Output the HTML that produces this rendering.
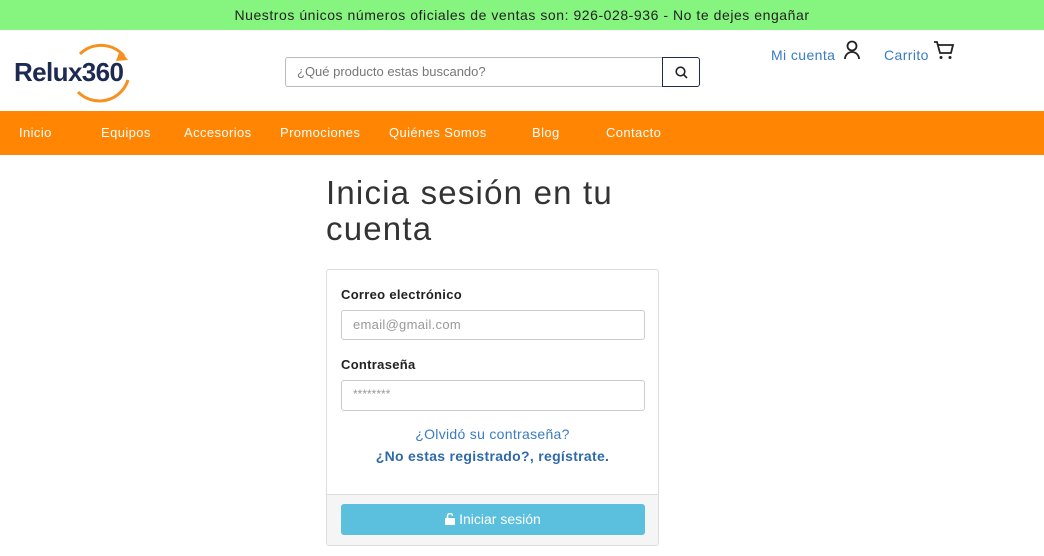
<!DOCTYPE html>
<html><head><meta charset="utf-8"><style>
*{box-sizing:border-box;margin:0;padding:0}
body{width:1044px;height:556px;overflow:hidden;background:#fff;font-family:"Liberation Sans",sans-serif;position:relative}
.top{height:30px;background:#86f57f;text-align:center;font-size:14px;line-height:30px;color:#222;letter-spacing:0.55px}
.hdr{position:absolute;top:30px;left:0;width:1044px;height:81px}
.nav{position:absolute;top:111px;left:0;width:1044px;height:44px;background:#ff8503}
.nav span{position:absolute;top:14px;color:#fff;font-size:13px;letter-spacing:0.4px}
.a{position:absolute}
</style></head><body>
<div class="top">Nuestros únicos números oficiales de ventas son: 926-028-936 - No te dejes engañar</div>
<div class="hdr">
 <svg class="a" style="left:14px;top:8px" width="120" height="66" viewBox="0 0 120 66">
  <path d="M66 16 A30 30 0 0 1 110 18" fill="none" stroke="#f7901e" stroke-width="3"/>
  <path d="M106 12 L114 22 L102 23 Z" fill="#f7901e"/>
  <path d="M114 42 A30 30 0 0 1 64 54" fill="none" stroke="#f7901e" stroke-width="3"/>
  <text x="0" y="43" font-family="Liberation Sans" font-weight="bold" font-size="26" fill="#1d2a52" letter-spacing="-0.6">Relux360</text>
 </svg>
 <div class="a" style="left:285px;top:27px;width:378px;height:30px;border:1px solid #bbb;border-radius:3px 0 0 3px;font-size:13px;color:#777;padding:6px 11px">¿Qué producto estas buscando?</div>
 <div class="a" style="left:662px;top:27px;width:38px;height:30px;border:1px solid #1d2a52;border-radius:0 3px 3px 0">
  <svg style="position:absolute;left:12px;top:8px" width="13" height="13" viewBox="0 0 13 13"><circle cx="5.5" cy="5.5" r="4.3" fill="none" stroke="#222" stroke-width="1.6"/><path d="M8.7 8.7L12 12" stroke="#222" stroke-width="1.6"/></svg></div>
 <div class="a" style="left:771px;top:17px;font-size:14px;color:#3a7bc4;letter-spacing:0.4px">Mi cuenta</div>
 <svg class="a" style="left:843px;top:10px" width="18" height="20" viewBox="0 0 18 20"><circle cx="9" cy="6" r="4.5" fill="none" stroke="#222" stroke-width="1.8"/><path d="M2 19 A7 7 0 0 1 16 19" fill="none" stroke="#222" stroke-width="1.8"/></svg>
 <div class="a" style="left:884px;top:17px;font-size:14px;color:#3a7bc4;letter-spacing:0.4px">Carrito</div>
 <svg class="a" style="left:933px;top:10px" width="22" height="20" viewBox="0 0 22 20"><path d="M1 2H4L7 13H18L20 5H5" fill="none" stroke="#222" stroke-width="1.8"/><circle cx="8" cy="17.5" r="1.5" fill="#222"/><circle cx="17" cy="17.5" r="1.5" fill="#222"/></svg>
</div>
<div class="nav">
 <span style="left:19px">Inicio</span><span style="left:101px">Equipos</span><span style="left:184px">Accesorios</span><span style="left:280px">Promociones</span><span style="left:389px">Quiénes Somos</span><span style="left:532px">Blog</span><span style="left:606px">Contacto</span>
</div>
<div class="a" style="left:326px;top:175px;font-size:33px;line-height:36px;color:#333;letter-spacing:1.2px">Inicia sesión en tu<br>cuenta</div>
<div class="a" style="left:326px;top:269px;width:333px;height:277px;border:1px solid #ddd;border-radius:3px;overflow:hidden">
 <div class="a" style="left:14px;top:17px;font-size:13px;font-weight:bold;color:#222;letter-spacing:0.3px">Correo electrónico</div>
 <div class="a" style="left:14px;top:40px;width:304px;height:30px;border:1px solid #ccc;border-radius:3px;font-size:13px;color:#999;padding:6px 11px;letter-spacing:0.3px">email@gmail.com</div>
 <div class="a" style="left:14px;top:87px;font-size:13px;font-weight:bold;color:#222;letter-spacing:0.3px">Contraseña</div>
 <div class="a" style="left:14px;top:110px;width:304px;height:31px;border:1px solid #ccc;border-radius:3px;font-size:12px;color:#999;padding:6px 11px">********</div>
 <div class="a" style="left:0;width:331px;top:156px;text-align:center;font-size:14px;color:#3a7bc4;letter-spacing:0.3px">¿Olvidó su contraseña?</div>
 <div class="a" style="left:0;width:331px;top:178px;text-align:center;font-size:14px;font-weight:bold;color:#2f6aa8;letter-spacing:0.3px">¿No estas registrado?, regístrate.</div>
 <div class="a" style="left:0;top:224px;width:331px;height:53px;background:#f5f5f5;border-top:1px solid #ddd"></div>
 <div class="a" style="left:14px;top:234px;width:304px;height:31px;background:#5bc0de;border-radius:3px;color:#fff;font-size:14px;text-align:center;line-height:31px">
  <svg width="10" height="12" viewBox="0 0 10 12" style="vertical-align:-1px"><rect x="0" y="5" width="10" height="7" rx="1" fill="#fff"/><path d="M2.5 5V3A2.5 2.5 0 0 1 7.5 3" fill="none" stroke="#fff" stroke-width="1.6"/></svg> Iniciar sesión</div>
</div>
</body></html>
